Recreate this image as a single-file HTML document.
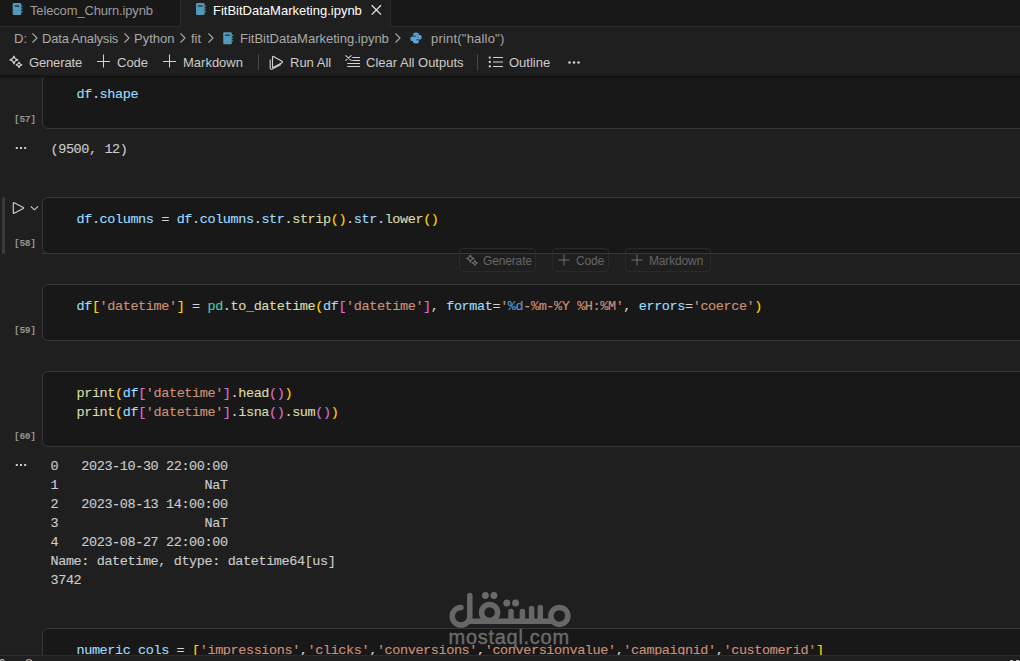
<!DOCTYPE html>
<html><head><meta charset="utf-8">
<style>
*{margin:0;padding:0;box-sizing:border-box}
html,body{width:1020px;height:661px;overflow:hidden;background:#1f1f1f;font-family:"Liberation Sans",sans-serif;}
.abs{position:absolute}
.ui{position:absolute;font:13px/16px "Liberation Sans",sans-serif;white-space:pre;color:#cccccc}
.code{position:absolute;font:13.5px/19px "Liberation Mono",monospace;letter-spacing:-0.4px;-webkit-text-stroke:0.12px currentColor;white-space:pre;color:#cccccc}
.cell{position:absolute;left:42px;width:1000px;background:#181818;border:1px solid #37373c;border-radius:6px}
.lbl{position:absolute;font:bold 9.5px/12px "Liberation Mono",monospace;letter-spacing:-0.3px;color:#959595;white-space:pre}
.v{color:#9cdcfe}.f{color:#dcdcaa}.s{color:#ce9178}.g{color:#ffd700}.p{color:#da70d6}.t{color:#4ec9b0}.o{color:#d4d4d4}.k{color:#569cd6}
svg{position:absolute;overflow:visible}
</style></head><body>

<!-- notebook content (page coords) -->
<div class="abs" style="left:0;top:0;width:1020px;height:655px;overflow:hidden">
<!-- cell 57 -->
<div class="cell" style="top:75px;height:54px"></div>
<div class="code" style="left:76.5px;top:84.5px"><span class="v">df</span><span class="o">.</span><span class="v">shape</span></div>
<div class="lbl" style="left:14px;top:114px">[57]</div>
<svg style="left:0;top:0" width="1020" height="661" viewBox="0 0 1020 661"><path d="M15.8 147h2v2h-2zM20 147h2v2h-2zM24.2 147h2v2h-2z" fill="#cccccc"/></svg>
<div class="code" style="left:50.5px;top:139.5px">(9500, 12)</div>

<!-- cell 58 -->
<div class="abs" style="left:2px;top:197px;width:3px;height:57px;background:#3a3a3e;border-radius:2px"></div>
<svg style="left:0;top:0" width="1020" height="661" viewBox="0 0 1020 661"><path d="M13.3 203.3Q13.3 202.3 14.2 202.8L23.2 207.5Q24 208 23.2 208.5L14.2 213.2Q13.3 213.7 13.3 212.7Z" fill="none" stroke="#d0d0d0" stroke-width="1.15" stroke-linejoin="round"/></svg>
<svg style="left:0;top:0" width="1020" height="661" viewBox="0 0 1020 661"><path d="M30.8 206.3L34.4 209.8L38 206.3" fill="none" stroke="#d0d0d0" stroke-width="1.1"/></svg>
<div class="cell" style="top:197px;height:57px"></div>
<div class="code" style="left:76.5px;top:209.5px"><span class="v">df</span><span class="o">.</span><span class="v">columns</span><span class="o"> = </span><span class="v">df</span><span class="o">.</span><span class="v">columns</span><span class="o">.</span><span class="v">str</span><span class="o">.</span><span class="f">strip</span><span class="g">()</span><span class="o">.</span><span class="v">str</span><span class="o">.</span><span class="f">lower</span><span class="g">()</span></div>
<div class="lbl" style="left:14px;top:238px">[58]</div>

<!-- add cell toolbar -->
<div class="abs" style="left:459px;top:248px;width:77px;height:24px;border:1px solid #2a2a2a;border-radius:4px"></div>
<div class="abs" style="left:552px;top:248px;width:57px;height:24px;border:1px solid #2a2a2a;border-radius:4px"></div>
<div class="abs" style="left:625px;top:248px;width:86px;height:24px;border:1px solid #2a2a2a;border-radius:4px"></div>
<div class="abs" style="left:42px;top:253px;width:1000px;height:1px;background:#37373c"></div>
<svg style="left:0;top:0" width="1020" height="661" viewBox="0 0 1020 661"><path d="M470.3 254.90000000000003Q470.86 258.05 474.0 258.6Q470.86 259.16 470.3 262.3Q469.75 259.16 466.6 258.6Q469.75 258.05 470.3 254.90000000000003ZM474.8 260.4Q475.19 262.61 477.40000000000003 263Q475.19 263.39 474.8 265.6Q474.41 263.39 472.2 263Q474.41 262.61 474.8 260.4Z" fill="none" stroke="#6e6e6e" stroke-width="1.05" stroke-linejoin="round"/></svg>
<div class="ui" style="left:483px;top:253px;color:#656565;font-size:12px;letter-spacing:-0.15px">Generate</div>
<svg style="left:558px;top:254px" width="12" height="12" viewBox="0 0 12 12"><path d="M6 0.5V11.5M0.5 6H11.5" stroke="#6e6e6e" stroke-width="1"/></svg>
<div class="ui" style="left:576px;top:253px;color:#656565;font-size:12px;letter-spacing:-0.15px">Code</div>
<svg style="left:631px;top:254px" width="12" height="12" viewBox="0 0 12 12"><path d="M6 0.5V11.5M0.5 6H11.5" stroke="#6e6e6e" stroke-width="1"/></svg>
<div class="ui" style="left:649px;top:253px;color:#656565;font-size:12px;letter-spacing:-0.15px">Markdown</div>

<!-- cell 59 -->
<div class="cell" style="top:284px;height:57px"></div>
<div class="code" style="left:76.5px;top:296.5px"><span class="v">df</span><span class="g">[</span><span class="s">'datetime'</span><span class="g">]</span><span class="o"> = </span><span class="t">pd</span><span class="o">.</span><span class="f">to_datetime</span><span class="g">(</span><span class="v">df</span><span class="p">[</span><span class="s">'datetime'</span><span class="p">]</span><span class="o">, </span><span class="v">format</span><span class="o">=</span><span class="s">'</span><span class="k">%d</span><span class="s">-%m-%Y %H:%M'</span><span class="o">, </span><span class="v">errors</span><span class="o">=</span><span class="s">'coerce'</span><span class="g">)</span></div>
<div class="lbl" style="left:14px;top:325px">[59]</div>

<!-- cell 60 -->
<div class="cell" style="top:371px;height:76px"></div>
<div class="code" style="left:76.5px;top:383.5px"><span class="f">print</span><span class="g">(</span><span class="v">df</span><span class="p">[</span><span class="s">'datetime'</span><span class="p">]</span><span class="o">.</span><span class="f">head</span><span class="p">()</span><span class="g">)</span>
<span class="f">print</span><span class="g">(</span><span class="v">df</span><span class="p">[</span><span class="s">'datetime'</span><span class="p">]</span><span class="o">.</span><span class="f">isna</span><span class="p">()</span><span class="o">.</span><span class="f">sum</span><span class="p">()</span><span class="g">)</span></div>
<div class="lbl" style="left:14px;top:431px">[60]</div>
<svg style="left:0;top:0" width="1020" height="661" viewBox="0 0 1020 661"><path d="M15.8 464h2v2h-2zM20 464h2v2h-2zM24.2 464h2v2h-2z" fill="#cccccc"/></svg>
<div class="code" style="left:50.5px;top:456.5px">0   2023-10-30 22:00:00
1                   NaT
2   2023-08-13 14:00:00
3                   NaT
4   2023-08-27 22:00:00
Name: datetime, dtype: datetime64[us]
3742</div>

<!-- cell 61 -->
<div class="cell" style="top:628px;height:60px"></div>
<div class="code" style="left:76.5px;top:640.5px"><span class="v">numeric_cols</span><span class="o"> = </span><span class="g">[</span><span class="s">'impressions'</span><span class="o">,</span><span class="s">'clicks'</span><span class="o">,</span><span class="s">'conversions'</span><span class="o">,</span><span class="s">'conversionvalue'</span><span class="o">,</span><span class="s">'campaignid'</span><span class="o">,</span><span class="s">'customerid'</span><span class="g">]</span></div>

<!-- watermark -->
<svg style="left:0;top:0" width="1020" height="661" viewBox="0 0 1020 661">
<g fill="none" stroke="#6b6b6b" stroke-width="5.5" stroke-linecap="round" opacity="0.95">
<path d="M469.8 595.5V616.3A8.8 8.8 0 1 1 461 607.5"/>
<path d="M470 621.3H552"/>
<circle cx="489.6" cy="612.4" r="8"/>
<path d="M511 611.5V620M522.4 611.5V620M531.6 608.6V620M540.3 607.5V620"/>
<circle cx="559.4" cy="615.9" r="8.5"/>
</g>
<g fill="#6b6b6b"><circle cx="485.4" cy="595.5" r="3.4"/><circle cx="493.9" cy="595.5" r="3.4"/><circle cx="506.8" cy="603.1" r="3.5"/><circle cx="515.6" cy="603.1" r="3.5"/></g>
</svg>
<div class="abs" style="left:448.5px;top:624.5px;font:20px/24px 'Liberation Sans',sans-serif;letter-spacing:0.72px;-webkit-text-stroke:0.4px #6b6b6b;color:#6b6b6b;white-space:pre">mostaql.com</div>
</div>
<!-- status/panel edge -->
<div class="abs" style="left:0;top:655px;width:1020px;height:6px;background:#1f1f1f;border-top:1px solid #2b2b2b"></div>
<svg style="left:0;top:0" width="1020" height="661" viewBox="0 0 1020 661"><path d="M1010.2 660.5h2.6M1016.2 660.5h3" stroke="#c8c8c8" stroke-width="1"/></svg>
<svg style="left:0;top:0" width="1020" height="661" viewBox="0 0 1020 661"><path d="M-1 661.5Q1.5 658.6 4.3 660.5" fill="none" stroke="#c8c8c8" stroke-width="1.2"/><circle cx="29" cy="662.5" r="2.8" fill="none" stroke="#c0a070" stroke-width="1.2"/></svg>

<div class="abs" style="left:0;top:75px;width:1020px;height:4px;background:linear-gradient(rgba(0,0,0,0.55),rgba(0,0,0,0))"></div>
<!-- tab bar -->
<div class="abs" style="left:0;top:0;width:1020px;height:27px;background:#181818;border-bottom:1px solid #2b2b2b"></div>
<div class="abs" style="left:0;top:0;width:181px;height:27px;background:#181818;border-right:1px solid #2b2b2b;border-bottom:1px solid #2b2b2b"></div>
<div class="abs" style="left:181px;top:0;width:210px;height:27px;background:#1f1f1f;border-right:1px solid #2b2b2b"></div>

<!-- tab icons -->
<svg style="left:0;top:0" width="1020" height="661" viewBox="0 0 1020 661"><rect x="12.7" y="3" width="8.6" height="12" rx="1.2" fill="#519aba"/><rect x="14.7" y="5.3" width="4.6" height="1.5" fill="#181818" opacity=".75"/><path d="M21.299999999999997 6.2h1.4M21.299999999999997 9h1.4M21.299999999999997 11.8h1.4" stroke="#519aba" stroke-width="1.1"/></svg>
<div class="ui" style="left:30px;top:3px;color:#9d9d9d;letter-spacing:-0.15px">Telecom_Churn.ipynb</div>
<svg style="left:0;top:0" width="1020" height="661" viewBox="0 0 1020 661"><rect x="196" y="3" width="8.6" height="12" rx="1.2" fill="#519aba"/><rect x="198" y="5.3" width="4.6" height="1.5" fill="#1f1f1f" opacity=".75"/><path d="M204.6 6.2h1.4M204.6 9h1.4M204.6 11.8h1.4" stroke="#519aba" stroke-width="1.1"/></svg>
<div class="ui" style="left:213px;top:3px;color:#ffffff">FitBitDataMarketing.ipynb</div>
<svg style="left:0;top:0" width="1020" height="661" viewBox="0 0 1020 661"><path d="M371.7 5.3L381 14.6M381 5.3L371.7 14.6" stroke="#e8e8e8" stroke-width="1.25"/></svg>

<!-- breadcrumbs -->
<div class="ui" style="left:14px;top:31px;color:#a9a9a9">D:</div>
<svg style="left:32px;top:33px" width="6" height="10" viewBox="0 0 6 10"><path d="M0.5 0.5L5 5L0.5 9.5" fill="none" stroke="#a9a9a9" stroke-width="1.1"/></svg>
<div class="ui" style="left:42px;top:31px;color:#a9a9a9;letter-spacing:-0.2px">Data Analysis</div>
<svg style="left:124.3px;top:33px" width="6" height="10" viewBox="0 0 6 10"><path d="M0.5 0.5L5 5L0.5 9.5" fill="none" stroke="#a9a9a9" stroke-width="1.1"/></svg>
<div class="ui" style="left:134px;top:31px;color:#a9a9a9">Python</div>
<svg style="left:180px;top:33px" width="6" height="10" viewBox="0 0 6 10"><path d="M0.5 0.5L5 5L0.5 9.5" fill="none" stroke="#a9a9a9" stroke-width="1.1"/></svg>
<div class="ui" style="left:191px;top:31px;color:#a9a9a9">fit</div>
<svg style="left:208.3px;top:33px" width="6" height="10" viewBox="0 0 6 10"><path d="M0.5 0.5L5 5L0.5 9.5" fill="none" stroke="#a9a9a9" stroke-width="1.1"/></svg>
<svg style="left:0;top:0" width="1020" height="661" viewBox="0 0 1020 661"><rect x="223.2" y="32.2" width="8.6" height="12" rx="1.2" fill="#519aba"/><rect x="225.2" y="34.5" width="4.6" height="1.5" fill="#1f1f1f" opacity=".75"/><path d="M231.79999999999998 35.400000000000006h1.4M231.79999999999998 38.2h1.4M231.79999999999998 41.0h1.4" stroke="#519aba" stroke-width="1.1"/></svg>
<div class="ui" style="left:240px;top:31px;color:#a9a9a9">FitBitDataMarketing.ipynb</div>
<svg style="left:395px;top:33px" width="6" height="10" viewBox="0 0 6 10"><path d="M0.5 0.5L5 5L0.5 9.5" fill="none" stroke="#a9a9a9" stroke-width="1.1"/></svg>
<svg style="left:410px;top:32px" width="12" height="12" viewBox="0 0 12 12"><path d="M6 0.5C3.5 0.5 3.2 1.5 3.2 2.5V3.8H6.2V4.4H2.2C1 4.4 0.3 5.3 0.3 6.8S1 9.1 2.2 9.1H3V7.6C3 6.6 3.8 5.9 4.8 5.9H7.6C8.4 5.9 9 5.3 9 4.5V2.5C9 1.5 8.2 0.5 6 0.5Z" fill="#5a9fcf"/><path d="M6 11.5C8.5 11.5 8.8 10.5 8.8 9.5V8.2H5.8V7.6H9.8C11 7.6 11.7 6.7 11.7 5.2S11 2.9 9.8 2.9H9V4.4C9 5.4 8.2 6.1 7.2 6.1H4.4C3.6 6.1 3 6.7 3 7.5V9.5C3 10.5 3.8 11.5 6 11.5Z" fill="#5fa6d6"/></svg>
<div class="ui" style="left:431px;top:31px;color:#a9a9a9;letter-spacing:0.2px">print("hallo")</div>

<!-- toolbar -->
<div class="abs" style="left:0;top:50px;width:1020px;height:25px;background:#1f1f1f"></div>
<svg style="left:0;top:0" width="1020" height="661" viewBox="0 0 1020 661"><path d="M13.9 56.0Q14.48 59.31 17.8 59.9Q14.48 60.48 13.9 63.8Q13.32 60.48 10.0 59.9Q13.32 59.31 13.9 56.0ZM19 62.10000000000001Q19.42 64.48 21.8 64.9Q19.42 65.32 19 67.7Q18.58 65.32 16.2 64.9Q18.58 64.48 19 62.10000000000001Z" fill="none" stroke="#d4d4d4" stroke-width="1.15" stroke-linejoin="round"/></svg>
<div class="ui" style="left:29px;top:55px;color:#cccccc;letter-spacing:-0.15px">Generate</div>
<svg style="left:0;top:0" width="1020" height="661" viewBox="0 0 1020 661"><path d="M103.5 54.5V67.5M97 61.5H110" stroke="#d4d4d4" stroke-width="1"/></svg>
<div class="ui" style="left:117px;top:55px;color:#cccccc">Code</div>
<svg style="left:0;top:0" width="1020" height="661" viewBox="0 0 1020 661"><path d="M169.5 54.5V67.5M163 61.5H176" stroke="#d4d4d4" stroke-width="1"/></svg>
<div class="ui" style="left:183px;top:55px;color:#cccccc">Markdown</div>
<div class="abs" style="left:258px;top:54px;width:1px;height:16px;background:#4a4a4a"></div>
<svg style="left:0;top:0" width="1020" height="661" viewBox="0 0 1020 661"><path d="M272.5 57Q272.5 56 273.4 56.5L282 61.3Q283 62 282 62.7L273.4 67.2Q272.5 67.8 272.5 66.8Z" fill="none" stroke="#d4d4d4" stroke-width="1.1" stroke-linejoin="round"/><path d="M270.2 59.8V67.8Q270.2 69.8 272.2 69L280.6 64.8" fill="none" stroke="#d4d4d4" stroke-width="1.1" stroke-linecap="round"/></svg>
<div class="ui" style="left:290px;top:55px;color:#cccccc">Run All</div>
<svg style="left:0;top:0" width="1020" height="661" viewBox="0 0 1020 661"><path d="M345.5 55.3L351.5 60.7M351.5 55.3L345.5 60.7M352.3 57.5H360M352.3 60.5H360M347.3 63.5H360M347.3 66.5H360" fill="none" stroke="#d4d4d4" stroke-width="1.05"/></svg>
<div class="ui" style="left:366px;top:55px;color:#cccccc">Clear All Outputs</div>
<div class="abs" style="left:477px;top:54px;width:1px;height:16px;background:#4a4a4a"></div>
<svg style="left:0;top:0" width="1020" height="661" viewBox="0 0 1020 661"><circle cx="489.8" cy="57.6" r="1.15" fill="#d4d4d4"/><circle cx="489.8" cy="62" r="1.15" fill="#d4d4d4"/><circle cx="489.8" cy="66.4" r="1.15" fill="#d4d4d4"/><path d="M493 57.5H503M493 62H503M493 66.5H503" fill="none" stroke="#d4d4d4" stroke-width="1.1"/></svg>
<div class="ui" style="left:509px;top:55px;color:#cccccc">Outline</div>
<svg style="left:568px;top:60.5px" width="12" height="3" viewBox="0 0 12 3"><circle cx="1.5" cy="1.5" r="1.25" fill="#d4d4d4"/><circle cx="6" cy="1.5" r="1.25" fill="#d4d4d4"/><circle cx="10.5" cy="1.5" r="1.25" fill="#d4d4d4"/></svg>


</body></html>
